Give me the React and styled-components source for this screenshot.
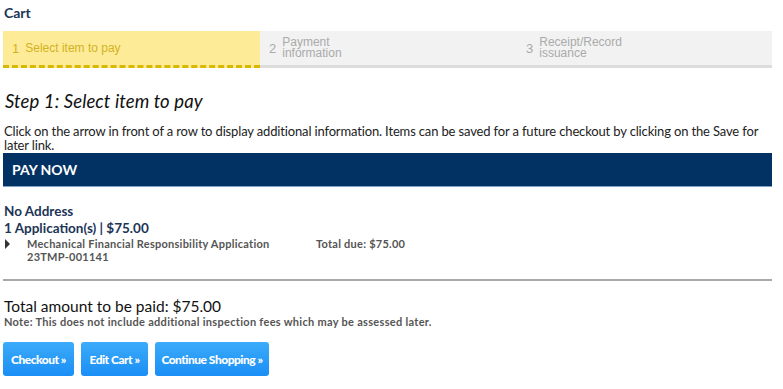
import React from 'react';
import styled, { createGlobalStyle } from 'styled-components';

const GlobalStyle = createGlobalStyle`
  body {
    margin: 0;
    background: #fff;
    font-family: Lato, "Noto Sans", sans-serif;
  }
`;

const Page = styled.div`
  width: 769px;
  padding: 0 11px 0 3px;
`;

const Heading = styled.h1`
  margin: 0;
  padding: 4px 0 0 1px;
  height: 27px;
  font-size: 14px;
  font-weight: bold;
  color: #1c3557;
`;

const Steps = styled.div`
  display: grid;
  grid-template-columns: 257px 257px 1fr;
  height: 37px;
`;

const Step = styled.div`
  display: flex;
  align-items: center;
  padding: 0 0 0 9px;
  gap: 6px;
  font-family: "Liberation Sans", Arial, sans-serif;
  font-size: 12px;
  line-height: 11px;
  background: ${(p) => (p.$active ? '#fdeb98' : '#f2f2f2')};
  color: ${(p) => (p.$active ? '#d3b21f' : '#aaaaaa')};
  border-bottom: 3px ${(p) => (p.$active ? 'dashed #d8b800' : 'solid #dcdcdc')};
  box-sizing: border-box;
`;

const StepNum = styled.span`
  font-size: 13px;
`;

const StepTitle = styled.h2`
  margin: 0;
  padding: 22px 0 0 2px;
  font-size: 18.5px;
  line-height: 22px;
  font-style: italic;
  font-weight: normal;
  letter-spacing: 0.1px;
  color: #111;
`;

const Intro = styled.p`
  margin: 0;
  padding: 12px 0 0 1px;
  font-size: 13px;
  line-height: 14px;
  letter-spacing: -0.15px;
  color: #222;
`;

const PayBar = styled.div`
  margin-top: 1px;
  height: 33px;
  display: flex;
  align-items: center;
  padding-left: 9px;
  background: #023263;
  color: #fff;
  font-size: 14px;
  font-weight: bold;
  border-bottom: 1px solid #7fa2c4;
`;

const Group = styled.div`
  padding: 16px 0 0 1px;
  color: #1c3557;
  font-weight: bold;
  font-size: 13.5px;
  line-height: 17px;
`;

const Item = styled.div`
  display: grid;
  grid-template-columns: 24px 289px 1fr;
  font-size: 11px;
  line-height: 13px;
  letter-spacing: 0.25px;
  color: #555;
  font-weight: bold;
`;

const Arrow = styled.span`
  width: 0;
  height: 0;
  margin: 2px 0 0 2px;
  border-left: 5px solid #333;
  border-top: 5px solid transparent;
  border-bottom: 5px solid transparent;
`;

const Divider = styled.hr`
  margin: 16px 0 0;
  border: 0;
  border-top: 2px solid #a9a9a9;
`;

const Total = styled.div`
  padding: 16px 0 0 1px;
  font-size: 15.5px;
  line-height: 18px;
  color: #111;
`;

const Note = styled.div`
  padding-left: 1px;
  font-size: 11px;
  line-height: 13px;
  letter-spacing: 0.3px;
  color: #555;
  font-weight: bold;
`;

const Buttons = styled.div`
  display: flex;
  gap: 7px;
  padding-top: 14px;
`;

const Button = styled.button`
  height: 34px;
  width: ${(p) => p.$w}px;
  border: 0;
  border-radius: 3px;
  background: linear-gradient(#3cabfa, #1a8ef5);
  color: #fff;
  font-family: Lato, sans-serif;
  font-size: 12px;
  font-weight: 900;
  letter-spacing: -0.5px;
  white-space: nowrap;
  padding: 0;
  cursor: pointer;
`;

export default function App() {
  return (
    <>
      <GlobalStyle />
      <Page>
        <Heading>Cart</Heading>
        <Steps>
          <Step $active>
            <StepNum>1</StepNum>
            <span>Select item to pay</span>
          </Step>
          <Step>
            <StepNum>2</StepNum>
            <span>Payment<br />information</span>
          </Step>
          <Step>
            <StepNum>3</StepNum>
            <span>Receipt/Record<br />issuance</span>
          </Step>
        </Steps>
        <StepTitle>Step 1: Select item to pay</StepTitle>
        <Intro>
          Click on the arrow in front of a row to display additional information. Items can be saved
          for a future checkout by clicking on the Save for later link.
        </Intro>
        <PayBar>PAY NOW</PayBar>
        <Group>
          <div>No Address</div>
          <div>1 Application(s) | $75.00</div>
        </Group>
        <Item>
          <Arrow />
          <div>
            Mechanical Financial Responsibility Application
            <br />
            23TMP-001141
          </div>
          <div>Total due: $75.00</div>
        </Item>
        <Divider />
        <Total>Total amount to be paid: $75.00</Total>
        <Note>Note: This does not include additional inspection fees which may be assessed later.</Note>
        <Buttons>
          <Button $w={71}>Checkout »</Button>
          <Button $w={67}>Edit Cart »</Button>
          <Button $w={114}>Continue Shopping »</Button>
        </Buttons>
      </Page>
    </>
  );
}
